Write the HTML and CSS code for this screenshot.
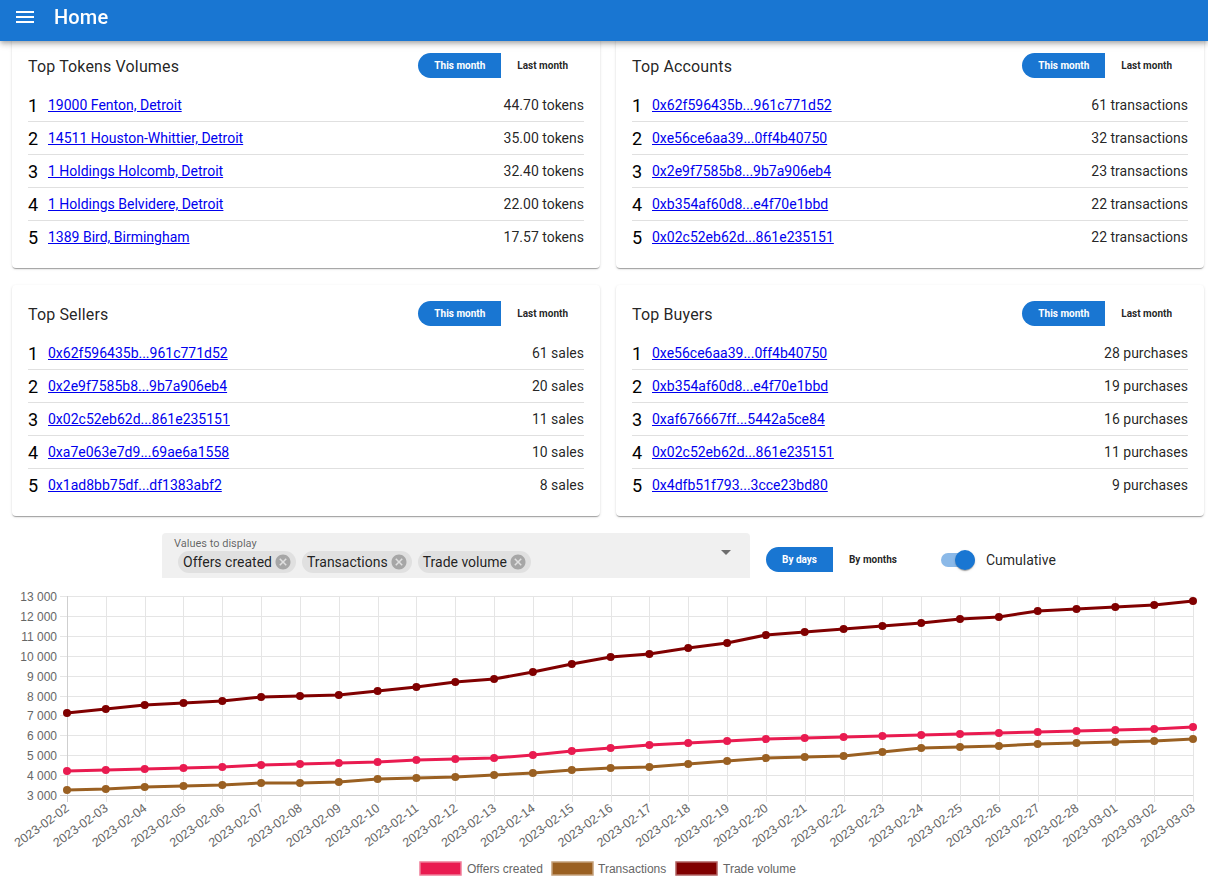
FILE: index.html
```html
<!DOCTYPE html>
<html lang="en">
<head>
<meta charset="utf-8">
<title>Home</title>
<link rel="stylesheet" href="styles.css">
</head>
<body>
<header class="appbar">
  <div class="appbar-inner">
    <svg class="menu-icon" viewBox="0 0 24 24" width="24" height="24"><path fill="#fff" d="M3 18h18v-2H3v2zm0-5h18v-2H3v2zm0-7v2h18V6H3z"/></svg>
    <span class="appbar-title">Home</span>
  </div>
</header>

<main class="content">
  <div class="cards">
    <section class="card">
      <div class="card-head">
        <h2 class="card-title">Top Tokens Volumes</h2>
        <div class="toggle"><button class="toggle-btn selected">This month</button><button class="toggle-btn">Last month</button></div>
      </div>
      <ol class="rank-list">
        <li class="rank-row"><span class="rank">1</span><a class="rank-link" href="#">19000 Fenton, Detroit</a><span class="rank-value">44.70 tokens</span></li>
        <li class="rank-row"><span class="rank">2</span><a class="rank-link" href="#">14511 Houston-Whittier, Detroit</a><span class="rank-value">35.00 tokens</span></li>
        <li class="rank-row"><span class="rank">3</span><a class="rank-link" href="#">1 Holdings Holcomb, Detroit</a><span class="rank-value">32.40 tokens</span></li>
        <li class="rank-row"><span class="rank">4</span><a class="rank-link" href="#">1 Holdings Belvidere, Detroit</a><span class="rank-value">22.00 tokens</span></li>
        <li class="rank-row"><span class="rank">5</span><a class="rank-link" href="#">1389 Bird, Birmingham</a><span class="rank-value">17.57 tokens</span></li>
      </ol>
    </section>

    <section class="card">
      <div class="card-head">
        <h2 class="card-title">Top Accounts</h2>
        <div class="toggle"><button class="toggle-btn selected">This month</button><button class="toggle-btn">Last month</button></div>
      </div>
      <ol class="rank-list">
        <li class="rank-row"><span class="rank">1</span><a class="rank-link" href="#">0x62f596435b...961c771d52</a><span class="rank-value">61 transactions</span></li>
        <li class="rank-row"><span class="rank">2</span><a class="rank-link" href="#">0xe56ce6aa39...0ff4b40750</a><span class="rank-value">32 transactions</span></li>
        <li class="rank-row"><span class="rank">3</span><a class="rank-link" href="#">0x2e9f7585b8...9b7a906eb4</a><span class="rank-value">23 transactions</span></li>
        <li class="rank-row"><span class="rank">4</span><a class="rank-link" href="#">0xb354af60d8...e4f70e1bbd</a><span class="rank-value">22 transactions</span></li>
        <li class="rank-row"><span class="rank">5</span><a class="rank-link" href="#">0x02c52eb62d...861e235151</a><span class="rank-value">22 transactions</span></li>
      </ol>
    </section>

    <section class="card">
      <div class="card-head">
        <h2 class="card-title">Top Sellers</h2>
        <div class="toggle"><button class="toggle-btn selected">This month</button><button class="toggle-btn">Last month</button></div>
      </div>
      <ol class="rank-list">
        <li class="rank-row"><span class="rank">1</span><a class="rank-link" href="#">0x62f596435b...961c771d52</a><span class="rank-value">61 sales</span></li>
        <li class="rank-row"><span class="rank">2</span><a class="rank-link" href="#">0x2e9f7585b8...9b7a906eb4</a><span class="rank-value">20 sales</span></li>
        <li class="rank-row"><span class="rank">3</span><a class="rank-link" href="#">0x02c52eb62d...861e235151</a><span class="rank-value">11 sales</span></li>
        <li class="rank-row"><span class="rank">4</span><a class="rank-link" href="#">0xa7e063e7d9...69ae6a1558</a><span class="rank-value">10 sales</span></li>
        <li class="rank-row"><span class="rank">5</span><a class="rank-link" href="#">0x1ad8bb75df...df1383abf2</a><span class="rank-value">8 sales</span></li>
      </ol>
    </section>

    <section class="card">
      <div class="card-head">
        <h2 class="card-title">Top Buyers</h2>
        <div class="toggle"><button class="toggle-btn selected">This month</button><button class="toggle-btn">Last month</button></div>
      </div>
      <ol class="rank-list">
        <li class="rank-row"><span class="rank">1</span><a class="rank-link" href="#">0xe56ce6aa39...0ff4b40750</a><span class="rank-value">28 purchases</span></li>
        <li class="rank-row"><span class="rank">2</span><a class="rank-link" href="#">0xb354af60d8...e4f70e1bbd</a><span class="rank-value">19 purchases</span></li>
        <li class="rank-row"><span class="rank">3</span><a class="rank-link" href="#">0xaf676667ff...5442a5ce84</a><span class="rank-value">16 purchases</span></li>
        <li class="rank-row"><span class="rank">4</span><a class="rank-link" href="#">0x02c52eb62d...861e235151</a><span class="rank-value">11 purchases</span></li>
        <li class="rank-row"><span class="rank">5</span><a class="rank-link" href="#">0x4dfb51f793...3cce23bd80</a><span class="rank-value">9 purchases</span></li>
      </ol>
    </section>
  </div>

  <div class="controls">
    <div class="select">
      <div class="select-body">
        <div class="select-label">Values to display</div>
        <div class="chips">
          <span class="chip">Offers created<svg class="chip-del" viewBox="0 0 24 24"><path d="M12 2C6.47 2 2 6.47 2 12s4.47 10 10 10 10-4.47 10-10S17.53 2 12 2zm5 13.59L15.59 17 12 13.41 8.41 17 7 15.590 10.59 12 7 8.41 8.41 7 12 10.59 15.59 7 17 8.41 13.41 12 17 15.59z"/></svg></span>
          <span class="chip">Transactions<svg class="chip-del" viewBox="0 0 24 24"><path d="M12 2C6.47 2 2 6.47 2 12s4.47 10 10 10 10-4.47 10-10S17.53 2 12 2zm5 13.59L15.59 17 12 13.41 8.41 17 7 15.59 10.59 12 7 8.41 8.41 7 12 10.59 15.59 7 17 8.41 13.41 12 17 15.59z"/></svg></span>
          <span class="chip">Trade volume<svg class="chip-del" viewBox="0 0 24 24"><path d="M12 2C6.47 2 2 6.47 2 12s4.47 10 10 10 10-4.47 10-10S17.53 2 12 2zm5 13.59L15.59 17 12 13.41 8.41 17 7 15.59 10.59 12 7 8.41 8.41 7 12 10.59 15.59 7 17 8.41 13.41 12 17 15.59z"/></svg></span>
        </div>
      </div>
      <svg class="select-arrow" viewBox="0 0 24 24"><path d="M7 10l5 5 5-5z"/></svg>
    </div>
    <div class="toggle toggle-period"><button class="toggle-btn selected">By days</button><button class="toggle-btn">By months</button></div>
    <label class="switch-label">
      <span class="switch"><span class="switch-thumb"></span></span>
      <span class="switch-text">Cumulative</span>
    </label>
  </div>

  <div class="chart-wrap">
    <svg id="chart" class="chart" viewBox="0 585 1208 299" width="1208" height="299"></svg>
  </div>
</main>
<script src="script.js"></script>
</body>
</html>
```

FILE: styles.css
```css
* { box-sizing: border-box; }
html, body { margin: 0; padding: 0; background: #fff; }
body {
  font-family: Roboto, "Helvetica Neue", Arial, sans-serif;
  color: rgba(0,0,0,0.87);
  width: 1208px;
  overflow: hidden;
}

.appbar {
  position: fixed;
  top: 0; left: 0; right: 0;
  height: 41px;
  background: #1976d2;
  color: #fff;
  z-index: 10;
  box-shadow: 0 2px 4px -1px rgba(0,0,0,.2), 0 4px 5px 0 rgba(0,0,0,.14), 0 1px 10px 0 rgba(0,0,0,.12);
}
.appbar-inner {
  height: 34px;
  display: flex;
  align-items: center;
  padding-left: 13px;
}
.menu-icon { display: block; }
.appbar-title {
  margin-left: 17px;
  font-size: 20px;
  font-weight: 500;
  letter-spacing: 0.15px;
}

.content { padding-top: 37px; }

.cards {
  display: grid;
  grid-template-columns: 588px 588px;
  column-gap: 16px;
  row-gap: 17px;
  padding-left: 12px;
}
.card {
  background: #fff;
  border-radius: 4px;
  box-shadow: 0 2px 1px -1px rgba(0,0,0,.2), 0 1px 1px 0 rgba(0,0,0,.14), 0 1px 3px 0 rgba(0,0,0,.12);
  padding: 16px 16px 15px 16px;
}
.card-head {
  display: flex;
  align-items: center;
  justify-content: space-between;
  height: 25px;
  margin-bottom: 11px;
}
.card-title {
  margin: 0;
  padding-top: 1px;
  font-size: 16px;
  font-weight: 400;
  letter-spacing: 0.15px;
  color: rgba(0,0,0,0.87);
}

.toggle { display: flex; height: 25px; }
.toggle-btn {
  border: 0;
  margin: 0;
  padding: 0 16px;
  height: 25px;
  background: #fff;
  font-family: Roboto, Arial, sans-serif;
  font-size: 10px;
  font-weight: 700;
  color: rgba(0,0,0,0.87);
  cursor: pointer;
}
.toggle-btn:first-child { border-radius: 13px 0 0 13px; }
.toggle-btn:last-child { border-radius: 0 13px 13px 0; }
.toggle-btn.selected { background: #1976d2; color: #fff; }

.rank-list { list-style: none; margin: 0; padding: 0; }
.rank-row {
  display: flex;
  align-items: center;
  height: 33px;
  border-bottom: 1px solid #e0e0e0;
}
.rank-row:last-child { border-bottom: 0; height: 32px; }
.rank {
  width: 20px;
  font-size: 18px;
  color: #000;
}
.rank-link {
  font-size: 14px;
  color: #0000ee;
  text-decoration: underline;
}
.rank-value {
  margin-left: auto;
  font-size: 14px;
  color: rgba(0,0,0,0.87);
}

.controls {
  display: flex;
  align-items: flex-start;
  padding-left: 162px;
  margin-top: 17px;
  height: 45px;
}
.select {
  width: 588px;
  height: 45px;
  background: #f0f0f0;
  border-radius: 4px 4px 0 0;
  display: flex;
  align-items: flex-start;
  padding: 5px 12px 6px 12px;
}
.select-body { flex: 1; }
.select-label {
  font-size: 11px;
  line-height: 12px;
  color: rgba(0,0,0,0.6);
}
.chips {
  display: flex;
  gap: 6px;
  margin-left: 4px;
  margin-top: 1px;
}
.chip {
  display: inline-flex;
  align-items: center;
  height: 22px;
  border-radius: 11px;
  background: #e0e0e0;
  padding: 0 4px 0 5px;
  font-size: 14px;
  color: rgba(0,0,0,0.87);
}
.chip-del {
  width: 18px;
  height: 18px;
  margin-left: 2px;
  fill: rgba(0,0,0,0.26);
}
.select-arrow {
  width: 24px;
  height: 24px;
  fill: rgba(0,0,0,0.54);
  margin-top: 2px;
}

.toggle-period { margin-left: 16px; margin-top: 14px; }

.switch-label {
  display: flex;
  align-items: center;
  margin-left: 28px;
  margin-top: 17px;
  height: 20px;
}
.switch {
  display: flex;
  align-items: center;
  justify-content: flex-end;
  width: 34px;
  height: 14px;
  border-radius: 7px;
  background: #8bb9e8;
}
.switch-thumb {
  flex: none;
  width: 20px;
  height: 20px;
  border-radius: 50%;
  background: #1976d2;
  box-shadow: 0 2px 1px -1px rgba(0,0,0,.2), 0 1px 1px 0 rgba(0,0,0,.14), 0 1px 3px 0 rgba(0,0,0,.12);
}
.switch-text {
  margin-left: 11px;
  font-size: 14px;
  color: rgba(0,0,0,0.87);
}

.chart-wrap { margin-top: 7px; }
.chart { display: block; }
.chart .grid { stroke: #e5e5e5; stroke-width: 1; }
.chart .axis { stroke: #cfcfcf; stroke-width: 1; }
.chart .tick {
  font-family: "Liberation Sans", Arial, sans-serif;
  font-size: 12px;
  fill: #666;
}
.chart .xtick { font-size: 12.5px; }
.chart .series { fill: none; stroke-width: 3; stroke-linejoin: round; }
```

FILE: script.js
```js
(function () {
  var NS = 'http://www.w3.org/2000/svg';
  var svg = document.getElementById('chart');
  var X0 = 67, X1 = 1193, Y0 = 596, Y1 = 795;
  var labels = [];
  for (var d = 2; d <= 28; d++) labels.push('2023-02-' + (d < 10 ? '0' + d : d));
  for (var m = 1; m <= 3; m++) labels.push('2023-03-0' + m);
  var n = labels.length;
  var dx = (X1 - X0) / (n - 1);
  function xOf(i) { return X0 + i * dx; }
  function yOf(v) { return Y1 - (v - 3000) * (Y1 - Y0) / 10000; }
  function add(tag, attrs, text) {
    var e = document.createElementNS(NS, tag);
    for (var k in attrs) e.setAttribute(k, attrs[k]);
    if (text != null) e.textContent = text;
    svg.appendChild(e);
    return e;
  }
  var j, i;
  for (j = 0; j <= 10; j++) {
    var v = 3000 + j * 1000;
    var y = Math.round(yOf(v)) + 0.5;
    add('line', { x1: 60, y1: y, x2: X1 + 0.5, y2: y, 'class': j === 0 ? 'axis' : 'grid' });
    add('text', { x: 57, y: y + 4, 'text-anchor': 'end', 'class': 'tick' }, (v / 1000) + ' 000');
  }
  for (i = 0; i < n; i++) {
    var x = Math.round(xOf(i)) + 0.5;
    add('line', { x1: x, y1: Y0, x2: x, y2: Y1 + 7, 'class': i === 0 ? 'axis' : 'grid' });
    add('text', { transform: 'translate(' + (xOf(i) + 3) + ',' + (Y1 + 15) + ') rotate(-36)', 'text-anchor': 'end', 'class': 'tick xtick' }, labels[i]);
  }
  var series = [
    { name: 'Offers created', color: '#e91b50', border: '#f07c98',
      data: [4206,4256,4307,4357,4407,4508,4558,4608,4658,4759,4809,4859,5010,5211,5362,5513,5613,5714,5814,5864,5915,5965,6015,6065,6116,6166,6216,6266,6317,6417] },
    { name: 'Transactions', color: '#9a6022', border: '#c4a07a',
      data: [3251,3302,3402,3452,3503,3603,3603,3653,3804,3854,3905,4005,4106,4256,4357,4407,4558,4709,4859,4910,4960,5161,5362,5412,5462,5563,5613,5663,5714,5814] },
    { name: 'Trade volume', color: '#800000', border: '#b06060',
      data: [7120,7322,7523,7623,7724,7925,7975,8025,8226,8427,8678,8829,9181,9583,9935,10085,10387,10638,11040,11191,11342,11492,11643,11844,11945,12246,12347,12447,12548,12749] }
  ];
  for (var s = series.length - 1; s >= 0; s--) {
    var ser = series[s];
    var pts = ser.data.map(function (val, k) { return xOf(k).toFixed(1) + ',' + yOf(val).toFixed(1); }).join(' ');
    add('polyline', { points: pts, stroke: ser.color, 'class': 'series' });
    ser.data.forEach(function (val, k) {
      add('circle', { cx: xOf(k).toFixed(1), cy: yOf(val).toFixed(1), r: 4, fill: ser.color });
    });
  }
  var legendX = [420, 552, 676];
  var textX = [467, 598, 723];
  series.forEach(function (ser, k) {
    add('rect', { x: legendX[k], y: 862, width: 41, height: 13, fill: ser.color, stroke: ser.border, 'stroke-width': 1.5 });
    add('text', { x: textX[k], y: 872.5, 'class': 'tick' }, ser.name);
  });
})();
```
